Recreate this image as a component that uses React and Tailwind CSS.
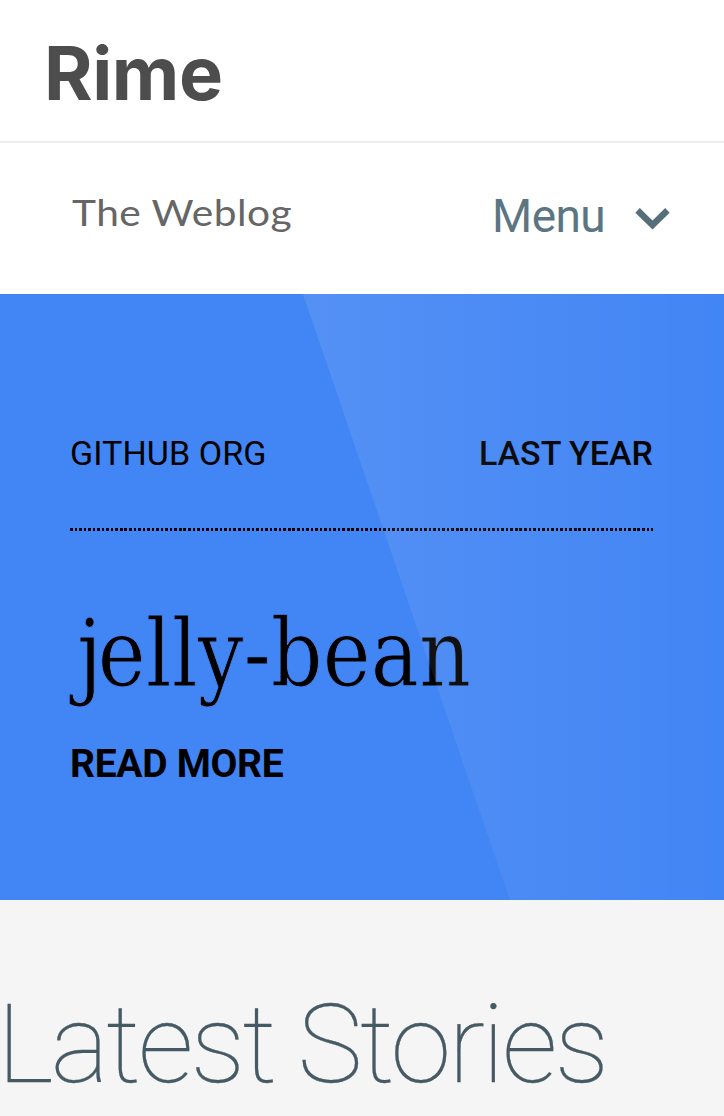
export default function App() {
  return (
    <div className="relative h-[1116px] w-[724px] overflow-hidden bg-[#f5f5f5] font-['Roboto',sans-serif]">
      <header className="bg-white">
        <div className="flex h-[143px] items-start border-b-2 border-[#eeeeee] pl-[44px] pt-[28px]">
          <span className="font-['Inter',sans-serif] text-[74px] font-bold leading-[90px] tracking-[-0.4px] text-[#4d4d4d]">Rime</span>
        </div>
        <nav className="flex h-[151px] items-start justify-between pl-[72px] pr-[54px] pt-[45px]">
          <span className="origin-left scale-x-[1.1] whitespace-nowrap font-['Lato',sans-serif] text-[37px] leading-[47px] tracking-[0.4px] text-[#666666]">The Weblog</span>
          <button className="flex items-center gap-[30px] text-[46px] leading-[56px] tracking-[-0.6px] text-[#5b7682]">
            Menu
            <svg className="mt-[6px]" width="35" height="22" viewBox="0 0 35 22" fill="none">
              <path d="M2.6 2.4 17.5 17 32.4 2.4" stroke="#546e7a" strokeWidth="6.4" />
            </svg>
          </button>
        </nav>
      </header>
      <section className="h-[606px] bg-[#4285f4] px-[70px] pt-[139px] text-black">
        <div className="flex w-[583px] justify-between text-[34px] leading-[40px]">
          <span className="tracking-[0.1px]">GITHUB ORG</span>
          <span className="font-medium">LAST YEAR</span>
        </div>
        <div className="mt-[55px] h-[3px] w-[583px] bg-[repeating-linear-gradient(90deg,#000_0_2.6px,transparent_2.6px_4.54px)]" />
        <h1 className="ml-[7px] mt-[63px] h-[120px] origin-left scale-x-[0.87] whitespace-nowrap font-['Roboto_Slab','DejaVu_Serif',serif] text-[93px] font-light leading-[120px] tracking-[0.1px] [-webkit-text-stroke:1px_#4285f4]">
          <span className="tracking-[-5px]">j</span>elly-bean
        </h1>
        <a className="mt-[26px] block text-[39px] font-bold leading-[48px] tracking-[-0.3px]">READ MORE</a>
      </section>
      <h2 className="-ml-[3px] mt-[80px] whitespace-nowrap text-[110px] font-thin leading-[130px] tracking-[-2.9px] text-[#455a64] [-webkit-text-stroke:0.3px_#455a64]">Latest Stories</h2>
      <div className="pointer-events-none absolute left-[303px] top-[294px] h-[650px] w-[421px] bg-linear-to-r from-white/10 to-white/0 [clip-path:polygon(0_0,100%_0,100%_100%,222px_100%)]" />
    </div>
  );
}
